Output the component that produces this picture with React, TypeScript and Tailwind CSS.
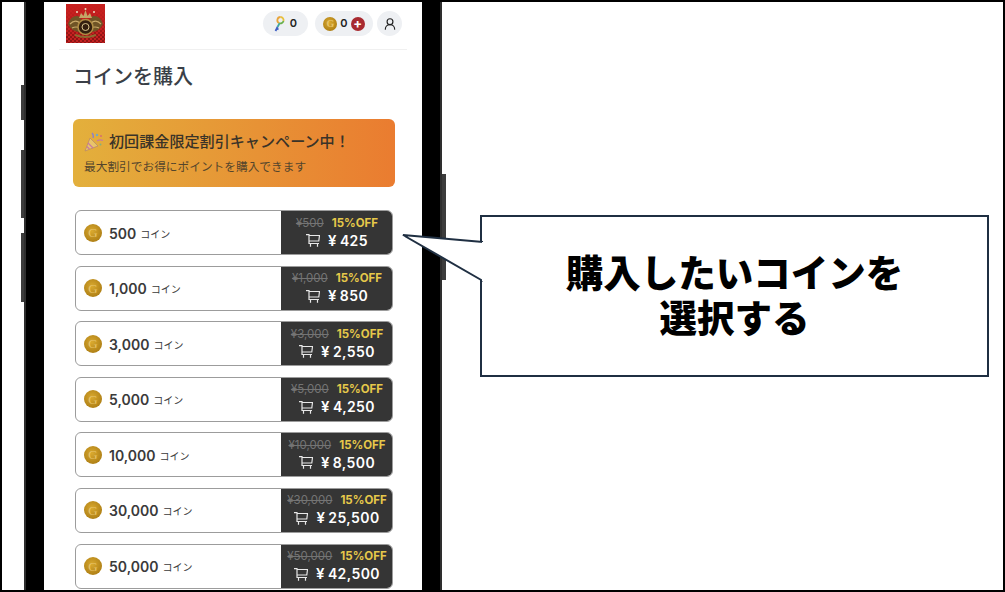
import { UserRound } from 'lucide-react'

const coins = [
  { amount: '500', was: '¥500', price: '425' },
  { amount: '1,000', was: '¥1,000', price: '850' },
  { amount: '3,000', was: '¥3,000', price: '2,550' },
  { amount: '5,000', was: '¥5,000', price: '4,250' },
  { amount: '10,000', was: '¥10,000', price: '8,500' },
  { amount: '30,000', was: '¥30,000', price: '25,500' },
  { amount: '50,000', was: '¥50,000', price: '42,500' },
]

function Coin({ size = 'row' }: { size?: 'row' | 'small' }) {
  return (
    <span
      className={
        size === 'row'
          ? "flex h-[18px] w-[18px] shrink-0 items-center justify-center rounded-full bg-[radial-gradient(circle_at_45%_40%,#d9a92f,#a97a12_85%)] font-['Liberation_Serif',serif] text-[13px] leading-none text-[#e8c46a]"
          : "flex h-[14px] w-[14px] shrink-0 items-center justify-center rounded-full bg-[radial-gradient(circle_at_45%_40%,#d9a92f,#a97a12_85%)] font-['Liberation_Serif',serif] text-[10px] leading-none text-[#e8c46a]"
      }
    >
      G
    </span>
  )
}

function Logo() {
  return (
    <svg width="39" height="39" viewBox="0 0 39 39" className="shrink-0">
      <defs>
        <pattern id="chk" width="4" height="4" patternUnits="userSpaceOnUse">
          <rect width="4" height="4" fill="#c42020" />
          <rect width="2" height="2" fill="#8c1414" />
          <rect x="2" y="2" width="2" height="2" fill="#8c1414" />
        </pattern>
        <linearGradient id="logoFade" x1="0" y1="0" x2="0" y2="1">
          <stop offset="0" stopColor="#c8201f" />
          <stop offset="0.6" stopColor="#c8201f" stopOpacity="0.55" />
          <stop offset="0.85" stopColor="#c8201f" stopOpacity="0" />
        </linearGradient>
      </defs>
      <rect width="39" height="39" fill="url(#chk)" />
      <rect width="39" height="39" fill="url(#logoFade)" />
      <path d="M2 20 Q5 11 12 12 Q16 14 15 19 L14 28 Q6 28 2 20Z" fill="#6f5426" />
      <path d="M37 20 Q34 11 27 12 Q23 14 24 19 L25 28 Q33 28 37 20Z" fill="#6f5426" />
      <path d="M4 20 Q9 15 14 19 M35 20 Q30 15 25 19 M6 24 Q10 22 14 24 M33 24 Q29 22 25 24" fill="none" stroke="#c9a968" strokeWidth="1.200" />
      <circle cx="19.500" cy="23" r="7.500" fill="#33200f" stroke="#b08d45" strokeWidth="1.500" />
      <circle cx="19.500" cy="23" r="3.500" fill="none" stroke="#d8c48d" strokeWidth="1" />
      <path d="M13 14 L15 9 L17.500 12 L19.500 6 L21.500 12 L24 9 L26 14Z" fill="#c3a567" />
      <circle cx="11" cy="8" r="1" fill="#eadfc2" />
      <circle cx="28" cy="8" r="1" fill="#eadfc2" />
      <circle cx="19.500" cy="5" r="1" fill="#eadfc2" />
      <path d="M9 31 Q19.500 35 30 31" fill="none" stroke="#8c6c30" strokeWidth="2" />
    </svg>
  )
}

function KeyIcon() {
  return (
    <svg width="11" height="16" viewBox="0 0 11 16" className="shrink-0">
      <path d="M6.500 1 A3.200 3.200 0 0 1 9.500 5" fill="none" stroke="#e8c13a" strokeWidth="1.800" />
      <path d="M9.500 5 A3.200 3.200 0 0 1 5 7" fill="none" stroke="#6ab04c" strokeWidth="1.800" />
      <path d="M5 7 A3.200 3.200 0 0 1 6.500 1" fill="none" stroke="#e8a43a" strokeWidth="1.800" />
      <path d="M5.500 7.500 L3.500 11" stroke="#3fa7a0" strokeWidth="1.800" />
      <path d="M3.500 11 L1.500 15 M2 12 L4.500 13.500" stroke="#3f5fc4" strokeWidth="1.800" />
    </svg>
  )
}

function Popper() {
  return (
    <svg width="20" height="20" viewBox="0 0 20 20" className="shrink-0">
      <path d="M1 19 L6 6 L14 14Z" fill="#e9c46a" stroke="#b98a6a" strokeWidth="0.800" />
      <path d="M4 11 L9 16 M2.800 14.500 L5.500 17" stroke="#c779a0" strokeWidth="1.300" />
      <path d="M9 6 Q10 3 8 1" fill="none" stroke="#8a7fd0" strokeWidth="1.300" />
      <path d="M13 9 Q16 7 19 8.500" fill="none" stroke="#c779a0" strokeWidth="1.300" />
      <circle cx="13" cy="3" r="1.200" fill="#6fa8c9" />
      <circle cx="17" cy="4" r="1" fill="#d96f6f" />
      <circle cx="16.500" cy="12.500" r="1" fill="#7fb27f" />
    </svg>
  )
}

function CartIcon() {
  return (
    <svg width="14" height="13" viewBox="0 0 14 13" fill="none" stroke="#e8e8e8" strokeWidth="1.200" className="shrink-0">
      <path d="M0 .7 H3 V9.500 H13 M3 1.500 H13.500 L12.800 7 H3 M4.500 10 V12.800 M11.500 10 V12.800" />
    </svg>
  )
}

function CoinRow({ amount, was, price }: { amount: string; was: string; price: string }) {
  return (
    <div className="flex h-[45px] overflow-hidden rounded-[6px] border border-[#9c9c9c]">
      <div className="flex flex-1 items-center pl-[8px]">
        <Coin />
        <span className="mt-[1px] ml-[7px] text-[14px] font-semibold text-[#3a3a3a]">{amount}</span>
        <span className="mt-[3px] ml-[4px] text-[10px] text-[#3a3a3a]">コイン</span>
      </div>
      <div className="-my-px -mr-px flex w-[112px] flex-col items-center justify-center bg-[#353535] pt-[1px]">
        <div className="flex items-center gap-[8px] text-[11.500px] leading-[15px]">
          <span className="text-[#747474] line-through">{was}</span>
          <span className="font-bold text-[#e6c84a]">15%OFF</span>
        </div>
        <div className="flex items-center gap-[8px] text-[14px] leading-[20px] font-semibold tracking-[0.4px] text-white">
          <CartIcon />
          <span>
            <span className="mr-[3px] text-[15px]">¥</span>
            {price}
          </span>
        </div>
      </div>
    </div>
  )
}

export default function App() {
  return (
    <div className="flex h-[592px] w-[1005px] overflow-hidden border-2 border-black bg-white font-['Inter','Noto_Sans_CJK_JP',sans-serif]">
      <div className="ml-[19px] flex w-[3px] shrink-0 flex-col pt-[83px]">
        <div className="h-[35px] w-[3px] bg-[#3c3c3c]" />
        <div className="mt-[30px] h-[68px] w-[3px] bg-[#3c3c3c]" />
        <div className="mt-[15px] h-[69px] w-[3px] bg-[#3c3c3c]" />
      </div>

      {/* phone */}
      <div className="h-full w-[418px] shrink-0 border-x-2 border-x-[#2e2e2e]">
        <div className="h-full border-x-[18px] border-x-black bg-white">
          <header className="mx-[15px] flex h-[48px] items-start border-b border-[#f0f0f0] pt-[2px] pl-[7px]">
            <Logo />
            <div className="mt-[7px] ml-auto flex items-center pr-[5px]">
              <div className="flex h-[25px] w-[45px] items-center justify-center gap-[5px] rounded-full bg-[#eef0f3] text-[11px] font-semibold text-[#222]">
                <KeyIcon />
                <span>0</span>
              </div>
              <div className="ml-[7px] flex h-[25px] w-[58px] items-center justify-center gap-[3px] rounded-full bg-[#eef0f3] text-[11px] font-semibold text-[#222]">
                <Coin size="small" />
                <span>0</span>
                <span className="flex h-[14px] w-[14px] items-center justify-center rounded-full bg-[#a82a30] text-[13px] leading-none font-bold text-white">+</span>
              </div>
              <div className="ml-[4px] flex h-[25px] w-[25px] items-center justify-center rounded-full bg-[#eef0f3]">
                <UserRound size={14} strokeWidth={2} className="text-[#222]" />
              </div>
            </div>
          </header>

          <div className="pl-[29px]">
            <h1 className="mt-[12px] text-[20px] leading-[30px] font-medium text-[#3a3f47]">コインを購入</h1>

            <div className="mt-[27px] flex h-[68px] w-[322px] flex-col justify-center rounded-[6px] bg-[linear-gradient(90deg,#e3b03c,#ea7c30)] pl-[11px]">
              <div className="flex items-center gap-[5px] text-[15.100px] leading-[22px] font-medium text-[#3a3328]">
                <Popper />
                <span>初回課金限定割引キャンペーン中！</span>
              </div>
              <p className="mt-[6px] text-[11.700px] leading-[16px] text-[#54452c]">最大割引でお得にポイントを購入できます</p>
            </div>

            <div className="mt-[23px] ml-[2px] flex w-[318px] flex-col gap-[10.600px]">
              {coins.map(c => (
                <CoinRow key={c.amount} {...c} />
              ))}
            </div>
          </div>
        </div>
      </div>

      <div className="flex w-[4px] shrink-0 flex-col pt-[172px]">
        <div className="h-[106px] w-[4px] bg-[#3c3c3c]" />
      </div>

      {/* callout */}
      <div className="relative mt-[213px] ml-[34px] flex h-[162px] w-[509px] flex-col items-center justify-center border-2 border-[#1f2f42] bg-white text-[37.500px] leading-[46px] font-black text-black">
        <svg width="82" height="50" viewBox="0 0 82 50" className="absolute top-[-2px] left-[-80px] overflow-visible">
          <path d="M81 27 L1 20 L81 66" fill="#fff" stroke="#1f2f42" strokeWidth="2" />
          <rect x="80" y="27" width="3" height="39" fill="#fff" />
        </svg>
        <p className="relative">購入したいコインを</p>
        <p className="relative -mt-px">選択する</p>
      </div>
    </div>
  )
}
